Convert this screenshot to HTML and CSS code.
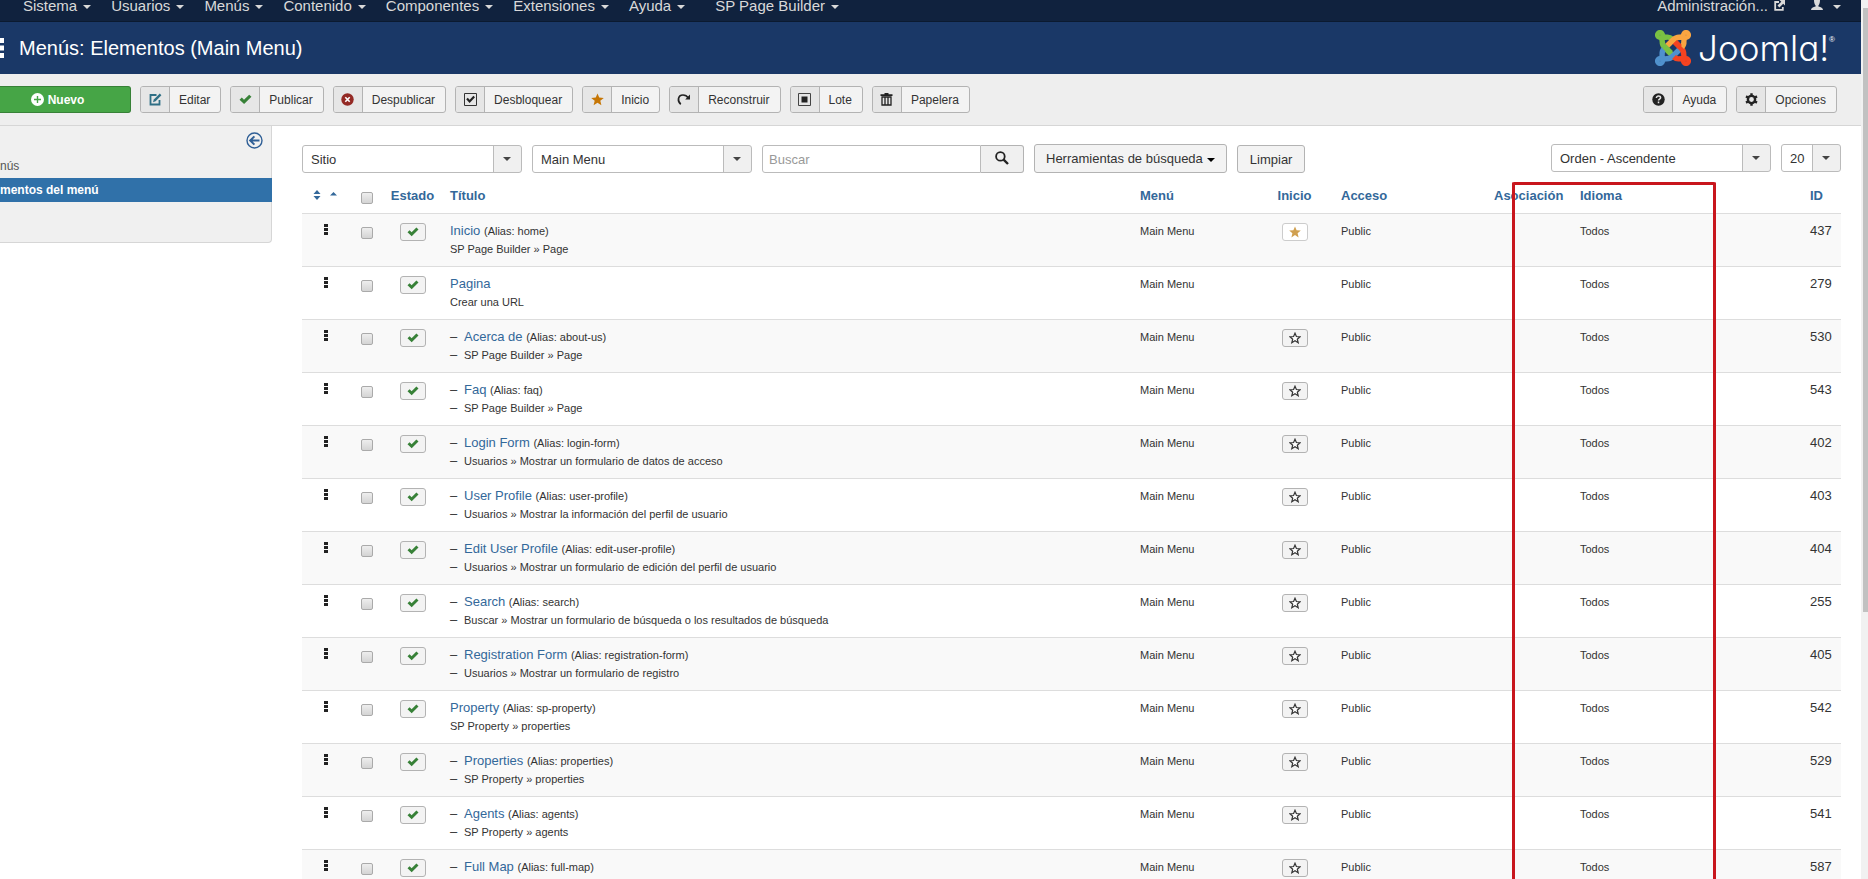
FILE: index.html
```html
<!DOCTYPE html>
<html lang="es">
<head>
<meta charset="utf-8">
<meta name="viewport" content="width=device-width, initial-scale=1.0">
<link rel="stylesheet" href="styles.css">
<title>Menús: Elementos (Main Menu)</title>
</head>
<body>
<svg class="symbols" width="0" height="0">
<symbol id="check" viewBox="0 0 12 10"><path d="M0.5 5.2 2.6 3.2 4.6 5.2 9.4 0.6 11.5 2.4 4.7 9.2Z" fill="#378137"/></symbol>
<symbol id="star" viewBox="0 0 12 12"><path d="M6 0.4 7.6 4.2 11.8 4.5 8.6 7.2 9.6 11.4 6 9.1 2.4 11.4 3.4 7.2 0.2 4.5 4.4 4.2Z"/></symbol>
<symbol id="staro" viewBox="0 0 12 12"><path d="M6 1.2 7.4 4.5 11 4.8 8.3 7.2 9.2 10.7 6 8.8 2.8 10.7 3.7 7.2 1 4.8 4.6 4.5Z" fill="#fff" stroke="#333" stroke-width="1.2"/></symbol>
<symbol id="dots" viewBox="0 0 4 12"><path d="M0 0h4v3H0zM0 4h4v3H0zM0 8h4v3H0z" fill="#222"/></symbol>
</svg>
<div class="page">
<div class="main">
<nav class="nav">
<a href="#">Sistema<i class="caret"></i></a>
<a href="#">Usuarios<i class="caret"></i></a>
<a href="#">Menús<i class="caret"></i></a>
<a href="#">Contenido<i class="caret"></i></a>
<a href="#">Componentes<i class="caret"></i></a>
<a href="#">Extensiones<i class="caret"></i></a>
<a href="#">Ayuda<i class="caret"></i></a>
<a href="#" class="extra">SP Page Builder<i class="caret"></i></a>
<a href="#" class="site">Administración...<svg width="11" height="11" viewBox="0 0 11 11"><path d="M5 2H1.2V9.8H8.8V7" fill="none" stroke="#d9d9d9" stroke-width="1.8"/><path d="M5.5 0H11V5.5L9.2 3.7 5.4 7.5 3.5 5.6 7.3 1.8Z" fill="#d9d9d9"/></svg></a>
<a href="#" class="user" aria-label="Usuario"><svg width="12" height="10" viewBox="0 0 12 10"><path d="M3 0H9C9 3 8.2 4.8 7.4 5.4V6.4C10 7 12 7.8 12 10H0C0 7.8 2 7 4.6 6.4V5.4C3.8 4.8 3 3 3 0Z" fill="#d9d9d9"/></svg><i class="caret"></i></a>
</nav>
<header class="header">
<svg class="listicon" width="4" height="20" viewBox="0 0 4 20"><path d="M0 0h4v5H0zM0 7.5h4v5H0zM0 15h4v5H0z" fill="#fff"/></svg>
<h1>Menús: Elementos (Main Menu)</h1>
<a href="#" class="logo">
<svg width="36" height="36" viewBox="0 0 36 36" fill="none" stroke-width="5.4">
<g stroke="#7ac143"><circle cx="5" cy="5" r="2.4"/><path d="M6 6C9 12 5 13 10 18L17 25M6 6C12 9 13 5 17 9"/></g>
<g stroke="#5091cd"><circle cx="5" cy="31" r="2.4"/><path d="M6 30C12 27 13 31 18 26L25 19M6 30C9 24 5 23 9 19"/></g>
<g stroke="#f44321"><circle cx="31" cy="31" r="2.4"/><path d="M30 30C27 24 31 23 26 18L19 11M30 30C24 27 23 31 19 27"/></g>
<g stroke="#f9a541"><circle cx="31" cy="5" r="2.4"/><path d="M30 6C24 9 23 5 18 10L12 16M30 6C27 12 31 13 27 17"/></g>
<path d="M9 16 16 23" stroke="#7ac143"/>
<path d="M20 12 25 17" stroke="#f44321"/>
</svg>
<span class="word">Joomla!</span><sup>®</sup>
</a>
</header>
<div class="toolbar">
<button class="new"><svg width="13" height="13" viewBox="0 0 13 13"><circle cx="6.5" cy="6.5" r="6.5" fill="#fff"/><path d="M6.5 3V10M3 6.5H10" stroke="#46a546" stroke-width="1.4"/></svg>Nuevo</button>
<button class="tool"><span><svg width="13" height="13" viewBox="0 0 13 13"><path d="M7.5 2H1.5V11.5H10.5V7" fill="none" stroke="#2f6f85" stroke-width="1.8"/><path d="M10.8 0.6 12.4 2.2 6.6 8.2 4 9.2 4.8 6.6Z" fill="#2f6f85"/></svg></span>Editar</button>
<button class="tool"><span><svg width="13" height="11"><use href="#check"/></svg></span>Publicar</button>
<button class="tool"><span><svg width="13" height="13" viewBox="0 0 13 13"><circle cx="6.5" cy="6.5" r="6.2" fill="#942a25"/><path d="M4.3 4.3 8.7 8.7M8.7 4.3 4.3 8.7" stroke="#fff" stroke-width="1.6"/></svg></span>Despublicar</button>
<button class="tool"><span><svg width="13" height="13" viewBox="0 0 13 13"><path d="M0.5 0.5H12.5V12.5H0.5Z" fill="none" stroke="#333"/><path d="M3 5.6 5.6 8.4 10.2 3.6" fill="none" stroke="#222" stroke-width="2.2"/></svg></span>Desbloquear</button>
<button class="tool"><span><svg width="13" height="13" fill="#c67605"><use href="#star"/></svg></span>Inicio</button>
<button class="tool"><span><svg width="14" height="13" viewBox="0 0 14 13"><path d="M3.8 11.2C0.2 8.6 0.6 2 6 2 8.6 2 10.2 3.2 11.4 5" fill="none" stroke="#222" stroke-width="1.7"/><path d="M13 1.6V6.4H8.2Z" fill="#222"/></svg></span>Reconstruir</button>
<button class="tool"><span><svg width="13" height="13" viewBox="0 0 13 13"><path d="M0.5 0.5H12.5V12.5H0.5Z" fill="none" stroke="#444"/><path d="M3.5 3.5H9.5V9.5H3.5Z" fill="#222"/></svg></span>Lote</button>
<button class="tool"><span><svg width="13" height="13" viewBox="0 0 13 13"><path d="M4.5 0H8.5V1.2H12.5V3H0.5V1.2H4.5Z" fill="#222"/><path d="M2 4V12H11V4M5 4V12M8 4V12M1.4 4H11.6" fill="none" stroke="#222" stroke-width="1.3"/></svg></span>Papelera</button>
<button class="tool help"><span><svg width="13" height="13" viewBox="0 0 13 13"><circle cx="6.5" cy="6.5" r="6.2" fill="#222"/><path d="M4.4 5C4.4 2.4 8.6 2.6 8.6 4.8 8.6 6.2 6.5 6.2 6.5 7.6M6.5 8.6V10.2" fill="none" stroke="#e6e6e6" stroke-width="1.5"/></svg></span>Ayuda</button>
<button class="tool"><span><svg width="13" height="13" viewBox="0 0 13 13"><circle cx="6.5" cy="6.5" r="3.6" fill="none" stroke="#222" stroke-width="2.4"/><path d="M6.5 0.2V2.4M6.5 10.6V12.8M1 3.4 3 4.5M10 8.5 12 9.6M1 9.6 3 8.5M10 4.5 12 3.4" stroke="#222" stroke-width="2.4"/></svg></span>Opciones</button>
</div>
<div class="body">
<aside class="sidebar">
<a href="#" class="toggle" aria-label="Ocultar"><svg width="17" height="17" viewBox="0 0 17 17" fill="none" stroke="#2f5f96"><circle cx="8.5" cy="8.5" r="7.5" stroke-width="1.4"/><path d="M13.5 8.5H5M8.4 4.4 4.2 8.5 8.4 12.6" stroke-width="2"/></svg></a>
<a href="#" class="item">nús</a>
<a href="#" class="item active">mentos del menú</a>
</aside>
<section class="content">
<div class="filters">
<div class="select"><select aria-label="Sitio"><option>Sitio</option></select></div>
<div class="select"><select aria-label="Menú"><option>Main Menu</option></select></div>
<div class="search"><input type="text" placeholder="Buscar" aria-label="Buscar"><button aria-label="Buscar"><svg width="14" height="14" viewBox="0 0 14 14" fill="none" stroke="#222"><circle cx="5.4" cy="5.4" r="4.3" stroke-width="1.8"/><path d="M8.6 8.6 13 13" stroke-width="2.4"/></svg></button></div>
<button class="btn tools">Herramientas de búsqueda<i class="caret"></i></button>
<button class="btn">Limpiar</button>
<div class="select order"><select aria-label="Orden"><option>Orden - Ascendente</option></select></div>
<div class="select limit"><select aria-label="Límite"><option>20</option></select></div>
</div>
<div class="list">
<table>
<colgroup><col class="c-order"><col class="c-check"><col class="c-state"><col><col class="c-menu"><col class="c-home"><col class="c-access"><col class="c-assoc"><col class="c-lang"><col class="c-id"></colgroup>
<thead>
<tr><th class="mid"><a href="#" aria-label="Orden"><svg width="25" height="10" viewBox="0 0 25 10" fill="#33689a"><path d="M0.5 4 4 0 7.5 4ZM0.5 6 4 10 7.5 6ZM17 5.5 20.5 2 24 5.5Z"/></svg></a></th><th class="mid"><input type="checkbox" aria-label="Todos"></th><th class="mid"><a href="#">Estado</a></th><th><a href="#">Título</a></th><th><a href="#">Menú</a></th><th class="mid"><a href="#">Inicio</a></th><th><a href="#">Acceso</a></th><th><a href="#">Asociación</a></th><th><a href="#">Idioma</a></th><th><a href="#">ID</a></th></tr>
</thead>
<tbody>
<tr><td class="mid"><svg class="dots"><use href="#dots"/></svg></td><td class="mid"><input type="checkbox" aria-label="Inicio"></td><td class="mid"><button class="micro" aria-label="Publicado"><svg><use href="#check"/></svg></button></td><td><a href="#">Inicio</a> <small>(Alias: home)</small><div class="sub">SP Page Builder » Page</div></td><td><small>Main Menu</small></td><td class="mid"><button class="micro off" aria-label="Inicio" disabled><svg fill="#d0a050"><use href="#star"/></svg></button></td><td><small>Public</small></td><td></td><td><small>Todos</small></td><td>437</td></tr>
<tr><td class="mid"><svg class="dots"><use href="#dots"/></svg></td><td class="mid"><input type="checkbox" aria-label="Pagina"></td><td class="mid"><button class="micro" aria-label="Publicado"><svg><use href="#check"/></svg></button></td><td><a href="#">Pagina</a><div class="sub">Crear una URL</div></td><td><small>Main Menu</small></td><td></td><td><small>Public</small></td><td></td><td><small>Todos</small></td><td>279</td></tr>
<tr><td class="mid"><svg class="dots"><use href="#dots"/></svg></td><td class="mid"><input type="checkbox" aria-label="Acerca de"></td><td class="mid"><button class="micro" aria-label="Publicado"><svg><use href="#check"/></svg></button></td><td><b>–</b><a href="#">Acerca de</a> <small>(Alias: about-us)</small><div class="sub"><b>–</b>SP Page Builder » Page</div></td><td><small>Main Menu</small></td><td class="mid"><button class="micro" aria-label="Inicio"><svg><use href="#staro"/></svg></button></td><td><small>Public</small></td><td></td><td><small>Todos</small></td><td>530</td></tr>
<tr><td class="mid"><svg class="dots"><use href="#dots"/></svg></td><td class="mid"><input type="checkbox" aria-label="Faq"></td><td class="mid"><button class="micro" aria-label="Publicado"><svg><use href="#check"/></svg></button></td><td><b>–</b><a href="#">Faq</a> <small>(Alias: faq)</small><div class="sub"><b>–</b>SP Page Builder » Page</div></td><td><small>Main Menu</small></td><td class="mid"><button class="micro" aria-label="Inicio"><svg><use href="#staro"/></svg></button></td><td><small>Public</small></td><td></td><td><small>Todos</small></td><td>543</td></tr>
<tr><td class="mid"><svg class="dots"><use href="#dots"/></svg></td><td class="mid"><input type="checkbox" aria-label="Login Form"></td><td class="mid"><button class="micro" aria-label="Publicado"><svg><use href="#check"/></svg></button></td><td><b>–</b><a href="#">Login Form</a> <small>(Alias: login-form)</small><div class="sub"><b>–</b>Usuarios » Mostrar un formulario de datos de acceso</div></td><td><small>Main Menu</small></td><td class="mid"><button class="micro" aria-label="Inicio"><svg><use href="#staro"/></svg></button></td><td><small>Public</small></td><td></td><td><small>Todos</small></td><td>402</td></tr>
<tr><td class="mid"><svg class="dots"><use href="#dots"/></svg></td><td class="mid"><input type="checkbox" aria-label="User Profile"></td><td class="mid"><button class="micro" aria-label="Publicado"><svg><use href="#check"/></svg></button></td><td><b>–</b><a href="#">User Profile</a> <small>(Alias: user-profile)</small><div class="sub"><b>–</b>Usuarios » Mostrar la información del perfil de usuario</div></td><td><small>Main Menu</small></td><td class="mid"><button class="micro" aria-label="Inicio"><svg><use href="#staro"/></svg></button></td><td><small>Public</small></td><td></td><td><small>Todos</small></td><td>403</td></tr>
<tr><td class="mid"><svg class="dots"><use href="#dots"/></svg></td><td class="mid"><input type="checkbox" aria-label="Edit User Profile"></td><td class="mid"><button class="micro" aria-label="Publicado"><svg><use href="#check"/></svg></button></td><td><b>–</b><a href="#">Edit User Profile</a> <small>(Alias: edit-user-profile)</small><div class="sub"><b>–</b>Usuarios » Mostrar un formulario de edición del perfil de usuario</div></td><td><small>Main Menu</small></td><td class="mid"><button class="micro" aria-label="Inicio"><svg><use href="#staro"/></svg></button></td><td><small>Public</small></td><td></td><td><small>Todos</small></td><td>404</td></tr>
<tr><td class="mid"><svg class="dots"><use href="#dots"/></svg></td><td class="mid"><input type="checkbox" aria-label="Search"></td><td class="mid"><button class="micro" aria-label="Publicado"><svg><use href="#check"/></svg></button></td><td><b>–</b><a href="#">Search</a> <small>(Alias: search)</small><div class="sub"><b>–</b>Buscar » Mostrar un formulario de búsqueda o los resultados de búsqueda</div></td><td><small>Main Menu</small></td><td class="mid"><button class="micro" aria-label="Inicio"><svg><use href="#staro"/></svg></button></td><td><small>Public</small></td><td></td><td><small>Todos</small></td><td>255</td></tr>
<tr><td class="mid"><svg class="dots"><use href="#dots"/></svg></td><td class="mid"><input type="checkbox" aria-label="Registration Form"></td><td class="mid"><button class="micro" aria-label="Publicado"><svg><use href="#check"/></svg></button></td><td><b>–</b><a href="#">Registration Form</a> <small>(Alias: registration-form)</small><div class="sub"><b>–</b>Usuarios » Mostrar un formulario de registro</div></td><td><small>Main Menu</small></td><td class="mid"><button class="micro" aria-label="Inicio"><svg><use href="#staro"/></svg></button></td><td><small>Public</small></td><td></td><td><small>Todos</small></td><td>405</td></tr>
<tr><td class="mid"><svg class="dots"><use href="#dots"/></svg></td><td class="mid"><input type="checkbox" aria-label="Property"></td><td class="mid"><button class="micro" aria-label="Publicado"><svg><use href="#check"/></svg></button></td><td><a href="#">Property</a> <small>(Alias: sp-property)</small><div class="sub">SP Property » properties</div></td><td><small>Main Menu</small></td><td class="mid"><button class="micro" aria-label="Inicio"><svg><use href="#staro"/></svg></button></td><td><small>Public</small></td><td></td><td><small>Todos</small></td><td>542</td></tr>
<tr><td class="mid"><svg class="dots"><use href="#dots"/></svg></td><td class="mid"><input type="checkbox" aria-label="Properties"></td><td class="mid"><button class="micro" aria-label="Publicado"><svg><use href="#check"/></svg></button></td><td><b>–</b><a href="#">Properties</a> <small>(Alias: properties)</small><div class="sub"><b>–</b>SP Property » properties</div></td><td><small>Main Menu</small></td><td class="mid"><button class="micro" aria-label="Inicio"><svg><use href="#staro"/></svg></button></td><td><small>Public</small></td><td></td><td><small>Todos</small></td><td>529</td></tr>
<tr><td class="mid"><svg class="dots"><use href="#dots"/></svg></td><td class="mid"><input type="checkbox" aria-label="Agents"></td><td class="mid"><button class="micro" aria-label="Publicado"><svg><use href="#check"/></svg></button></td><td><b>–</b><a href="#">Agents</a> <small>(Alias: agents)</small><div class="sub"><b>–</b>SP Property » agents</div></td><td><small>Main Menu</small></td><td class="mid"><button class="micro" aria-label="Inicio"><svg><use href="#staro"/></svg></button></td><td><small>Public</small></td><td></td><td><small>Todos</small></td><td>541</td></tr>
<tr><td class="mid"><svg class="dots"><use href="#dots"/></svg></td><td class="mid"><input type="checkbox" aria-label="Full Map"></td><td class="mid"><button class="micro" aria-label="Publicado"><svg><use href="#check"/></svg></button></td><td><b>–</b><a href="#">Full Map</a> <small>(Alias: full-map)</small></td><td><small>Main Menu</small></td><td class="mid"><button class="micro" aria-label="Inicio"><svg><use href="#staro"/></svg></button></td><td><small>Public</small></td><td></td><td><small>Todos</small></td><td>587</td></tr>
</tbody>
</table>
<div class="mark"></div>
</div>
</section>
</div>
</div>
<div class="scroll"><div class="thumb"></div></div>
</div>
</body>
</html>
```
FILE: styles.css
```css
*{
box-sizing:border-box;
}
body{
margin:0;
background:white;
color:#333;
font-family:"Liberation Sans",Arial,sans-serif;
font-size:13px;
line-height:18px;
overflow:hidden;
}
a{
color:#33689a;
text-decoration:none;
}
button,input,select{
font-family:inherit;
font-size:13px;
color:#333;
margin:0;
}
.symbols{
position:absolute;
}
.page{
display:flex;
height:100vh;
overflow:hidden;
}
.main{
flex:1;
min-width:0;
}
.caret{
display:inline-block;
border:4px solid transparent;
border-top-color:currentColor;
border-bottom:0;
vertical-align:middle;
}
/* top bars */
.nav{
display:flex;
gap:20px;
height:22px;
padding:0 20px 0 23px;
background:#10223e;
border-bottom:1px solid #0b1a30;
line-height:12px;
}
.nav a{
display:flex;
gap:6px;
color:#d9d9d9;
font-size:15px;
}
.nav .caret{
margin-top:5px;
}
.nav .extra{
margin-left:10px;
}
.nav .site{
margin-left:auto;
}
.nav .user{
gap:10px;
margin-left:6px;
}
.header{
display:flex;
align-items:center;
height:52px;
padding-right:26px;
background:#1a3867;
}
.header h1{
margin:0 auto 0 15px;
color:white;
font-size:20px;
font-weight:normal;
line-height:24px;
}
.logo{
display:flex;
align-items:center;
color:white;
}
.word{
margin-left:7px;
font-family:Inter,"Open Sans",sans-serif;
font-size:35px;
font-weight:300;
line-height:36px;
font-feature-settings:"cv11";
}
.logo sup{
align-self:flex-start;
font-size:8px;
line-height:20px;
}
.toolbar{
display:flex;
gap:9px;
height:52px;
padding:12px 24px 0 0;
background:#eee;
border-bottom:1px solid #d6d6d6;
}
.toolbar button{
display:flex;
align-items:center;
height:27px;
padding:0;
font-size:12px;
border:1px solid #b3b3b3;
border-radius:3px;
background:#f3f3f3;
}
.toolbar .tool{
padding-right:10px;
}
.tool span{
display:flex;
align-items:center;
justify-content:center;
width:29px;
height:25px;
margin-right:9px;
background:#e6e6e6;
border-right:1px solid #b3b3b3;
border-radius:2px 0 0 2px;
}
.toolbar .new{
justify-content:center;
gap:4px;
width:131px;
padding-right:15px;
color:white;
font-weight:bold;
background:#46a546;
border-color:#378137;
border-left:0;
border-radius:0 3px 3px 0;
}
.toolbar .help{
margin-left:auto;
}
/* sidebar */
.body{
display:flex;
align-items:flex-start;
}
.sidebar{
width:272px;
height:117px;
background:#f0f0f0;
border:solid #d6d6d6;
border-width:0 1px 1px 0;
border-radius:0 0 4px 0;
}
.toggle{
display:flex;
justify-content:flex-end;
padding:6px 8px 5px 0;
}
.item{
display:block;
padding:3px 0;
color:#555;
font-size:12px;
}
.active{
margin-right:-1px;
color:white;
font-weight:bold;
background:#3071a9;
}
.content{
flex:1;
min-width:0;
padding:18px 20px 0 30px;
}
/* filters */
.filters{
display:flex;
align-items:flex-end;
gap:10px;
height:29px;
}
.select{
position:relative;
width:220px;
height:28px;
}
.select select{
appearance:none;
width:100%;
height:28px;
padding:0 30px 0 8px;
background:linear-gradient(to left,#f0f0f0 27px,#bbb 27px,#bbb 28px,white 28px);
border:1px solid #bbb;
border-radius:3px;
}
.select::after{
content:"";
position:absolute;
right:11px;
top:12px;
border:4px solid transparent;
border-top-color:#444;
border-bottom:0;
pointer-events:none;
}
.search{
display:flex;
width:262px;
height:28px;
}
.search input{
flex:1;
min-width:0;
padding:0 6px;
border:1px solid #bbb;
border-radius:3px 0 0 3px;
}
.search input::placeholder{
color:#999;
}
.search button{
width:43px;
padding:0;
background:#f0f0f0;
border:1px solid #b3b3b3;
border-left:0;
border-radius:0 3px 3px 0;
}
.btn{
height:28px;
padding:0 12px;
background:#f3f3f3;
border:1px solid #b3b3b3;
border-radius:3px;
}
.tools{
height:29px;
padding:0 11px;
}
.tools .caret{
margin-left:4px;
color:#000;
}
.order{
align-self:flex-start;
margin-left:auto;
}
.limit{
align-self:flex-start;
width:60px;
}
/* list */
.list{
position:relative;
margin-top:5px;
}
table{
width:100%;
table-layout:fixed;
border-collapse:separate;
border-spacing:0;
}
.c-order{width:48px;}
.c-check{width:34px;}
.c-state{width:58px;}
.c-menu{width:125px;}
.c-home{width:76px;}
.c-access{width:153px;}
.c-assoc{width:86px;}
.c-lang{width:230px;}
.c-id{width:39px;}
th,td{
padding:8px;
text-align:left;
vertical-align:top;
white-space:nowrap;
}
th{
padding-top:9px;
}
td{
height:53px;
border-top:1px solid #ddd;
}
tbody tr:nth-child(odd) td{
background:#f9f9f9;
}
.mid{
padding-left:0;
padding-right:1px;
text-align:center;
}
small,.sub{
font-size:11px;
}
b{
display:inline-block;
width:14px;
font-size:13px;
font-weight:normal;
line-height:12px;
}
input[type=checkbox]{
appearance:none;
display:block;
width:12px;
height:12px;
margin:5px auto 0;
background:linear-gradient(#eee,#d4d4d4);
border:1px solid #aaa;
border-radius:2px;
}
.dots{
display:block;
width:4px;
height:12px;
margin:2px auto 0;
}
.micro{
display:flex;
align-items:center;
justify-content:center;
width:26px;
height:18px;
margin:1px auto 0;
padding:0;
background:#f3f3f3;
border:1px solid #b3b3b3;
border-radius:3px;
}
.micro svg{
width:12px;
height:12px;
}
.off{
background:white;
border-color:#ccc;
}
.mark{
position:absolute;
top:4px;
bottom:0;
right:125px;
width:204px;
border:3px solid #c8161d;
border-bottom:0;
border-radius:2px;
}
.scroll{
width:7px;
padding:8px 0 0 2px;
background:#f1f1f1;
}
.thumb{
height:604px;
background:#c1c1c1;
}
```
